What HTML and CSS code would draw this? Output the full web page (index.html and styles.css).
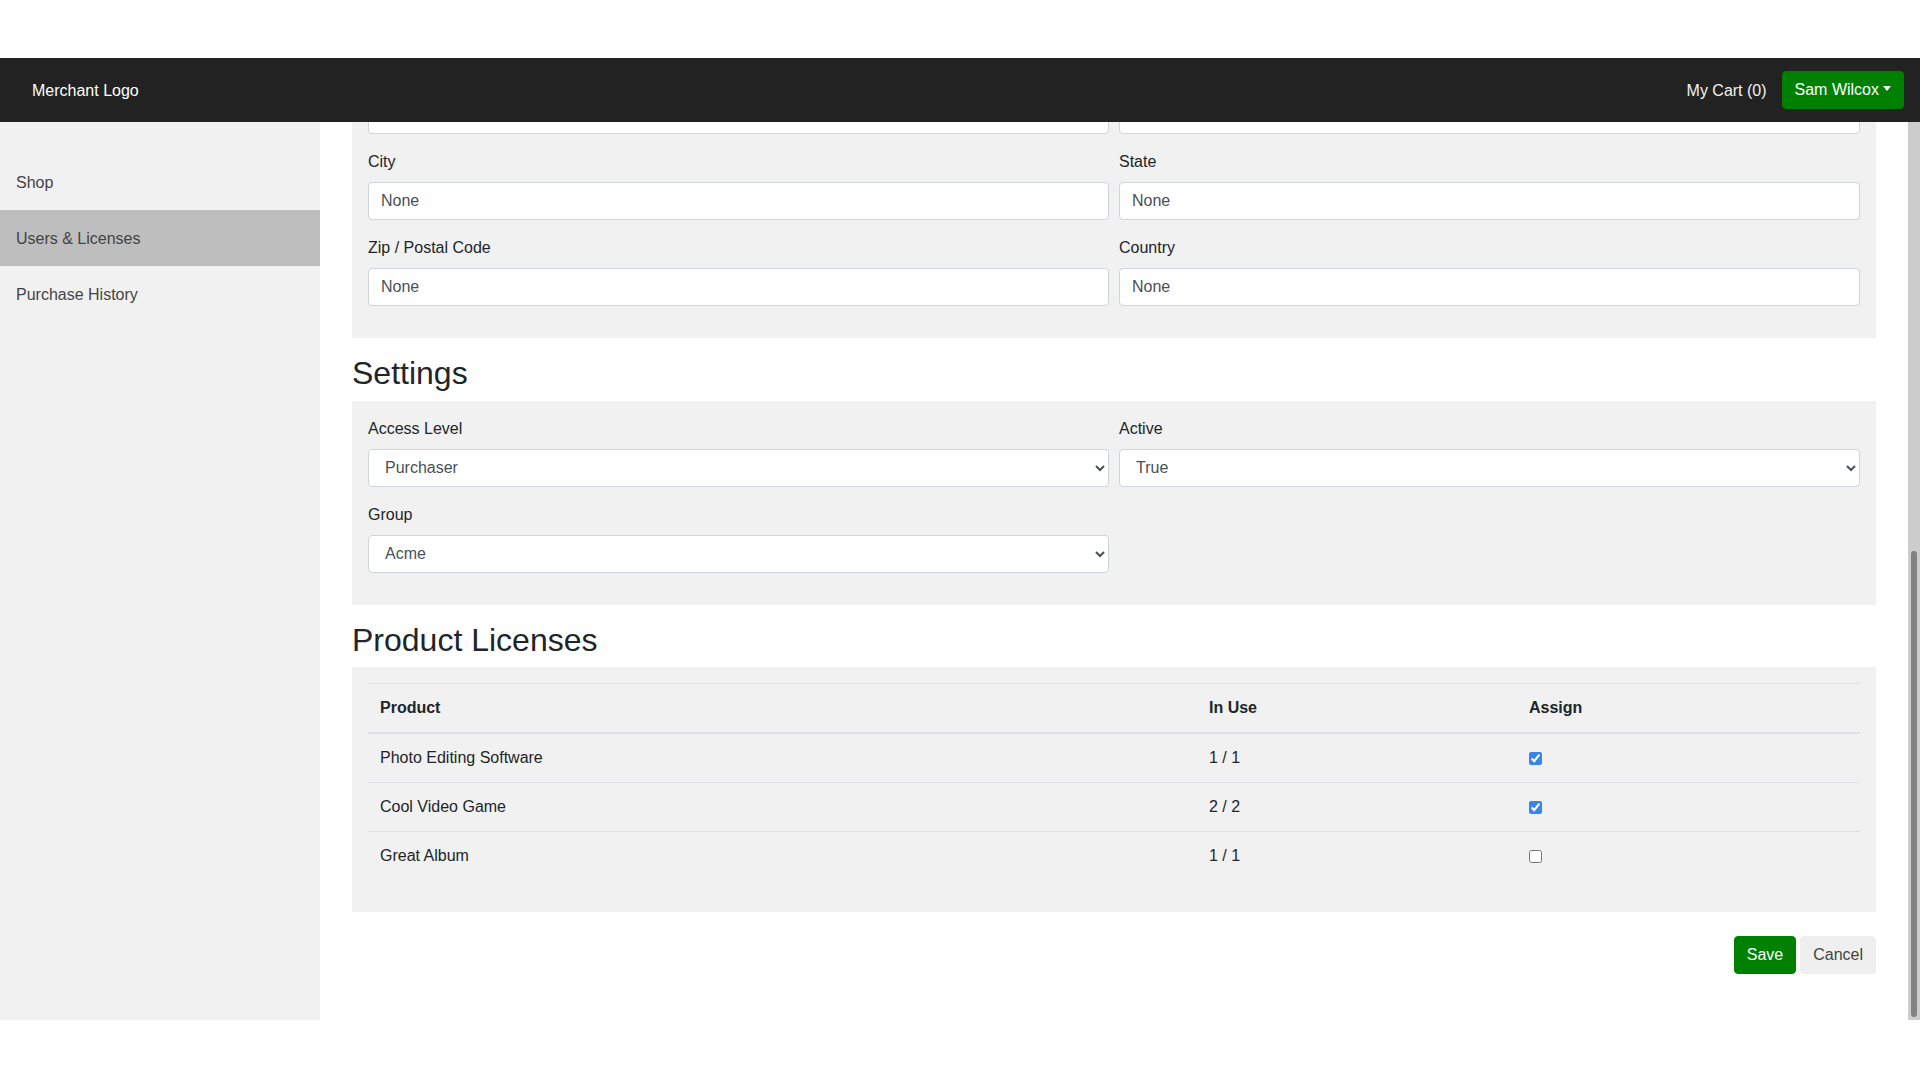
FILE: index.html
```html
<!DOCTYPE html>
<html lang="en">
<head>
<meta charset="utf-8">
<title>Users &amp; Licenses</title>
<link rel="stylesheet" href="styles.css">
</head>
<body>
<div class="topspace"></div>
<header class="navbar">
  <a class="brand" href="#">Merchant Logo</a>
  <div class="nav-right">
    <a class="cart" href="#">My Cart (0)</a>
    <button class="btn btn-green dropdown-toggle" type="button">Sam Wilcox</button>
  </div>
</header>
<div class="layout">
  <aside class="sidebar">
    <a class="side-item" href="#">Shop</a>
    <a class="side-item active" href="#">Users &amp; Licenses</a>
    <a class="side-item" href="#">Purchase History</a>
  </aside>
  <main class="content">
    <div class="content-inner">
      <section class="card">
        <div class="form-row">
          <div class="form-group"><input class="form-control" aria-label="Address Line 1"></div>
          <div class="form-group"><input class="form-control" aria-label="Address Line 2"></div>
        </div>
        <div class="form-row">
          <div class="form-group"><label>City</label><input class="form-control" value="None"></div>
          <div class="form-group"><label>State</label><input class="form-control" value="None"></div>
        </div>
        <div class="form-row">
          <div class="form-group"><label>Zip / Postal Code</label><input class="form-control" value="None"></div>
          <div class="form-group"><label>Country</label><input class="form-control" value="None"></div>
        </div>
      </section>
      <h2 class="section-title">Settings</h2>
      <section class="card">
        <div class="form-row">
          <div class="form-group"><label>Access Level</label>
            <select class="form-control"><option>Purchaser</option><option>Administrator</option></select>
          </div>
          <div class="form-group"><label>Active</label>
            <select class="form-control"><option>True</option><option>False</option></select>
          </div>
        </div>
        <div class="form-row">
          <div class="form-group"><label>Group</label>
            <select class="form-control"><option>Acme</option></select>
          </div>
        </div>
      </section>
      <h2 class="section-title">Product Licenses</h2>
      <section class="card card-last">
        <table class="table">
          <thead>
            <tr><th class="col-product">Product</th><th class="col-use">In Use</th><th class="col-assign">Assign</th></tr>
          </thead>
          <tbody>
            <tr><td>Photo Editing Software</td><td>1 / 1</td><td><input type="checkbox" class="check" checked></td></tr>
            <tr><td>Cool Video Game</td><td>2 / 2</td><td><input type="checkbox" class="check" checked></td></tr>
            <tr><td>Great Album</td><td>1 / 1</td><td><input type="checkbox" class="check"></td></tr>
          </tbody>
        </table>
      </section>
      <div class="actions">
        <button class="btn btn-green" type="button">Save</button>
        <button class="btn btn-light" type="button">Cancel</button>
      </div>
    </div>
  </main>
  <div class="scrollbar"><div class="scroll-thumb"></div></div>
</div>
</body>
</html>
```

FILE: styles.css
```css
* { box-sizing: border-box; }

html, body {
  margin: 0;
  height: 100%;
  overflow: hidden;
}

body {
  font-family: "Liberation Sans", Arial, Helvetica, sans-serif;
  font-size: 16px;
  line-height: 1.5;
  color: #212529;
  background: #fff;
}

.topspace { height: 58px; }

.navbar {
  height: 64px;
  background: #222222;
  display: flex;
  align-items: center;
  justify-content: space-between;
  padding: 0 16px 0 32px;
}

.brand {
  color: #fff;
  text-decoration: none;
  font-size: 16px;
  padding-top: 2px;
}

.nav-right {
  display: flex;
  align-items: center;
  gap: 15px;
}

.cart {
  color: #f2f2f2;
  text-decoration: none;
  padding-top: 2px;
}

.btn {
  font-family: inherit;
  font-size: 16px;
  line-height: 24px;
  padding: 6px 12px;
  border: 1px solid transparent;
  border-radius: 4px;
  cursor: pointer;
}

.btn-green {
  background: #008000;
  border-color: #008000;
  color: #fff;
}

.btn-light {
  background: #efefef;
  border-color: #efefef;
  color: #444;
}

.dropdown-toggle::after {
  content: "";
  display: inline-block;
  margin-left: 4px;
  vertical-align: 4px;
  border-top: 5px solid #fff;
  border-left: 4px solid transparent;
  border-right: 4px solid transparent;
}

.layout {
  display: flex;
  height: 898px;
}

.sidebar {
  width: 320px;
  flex: 0 0 320px;
  background: #f1f1f1;
  padding-top: 32px;
  display: flex;
  flex-direction: column;
}

.side-item {
  display: block;
  height: 56px;
  padding: 17px 16px 15px;
  color: #444;
  text-decoration: none;
}

.side-item.active { background: #bebebe; }

.content {
  flex: 1;
  min-width: 0;
  overflow: hidden;
  display: flex;
  flex-direction: column;
  justify-content: flex-end;
}

.content-inner {
  flex: 0 0 auto;
  padding: 0 32px 46px;
}

.scrollbar {
  flex: 0 0 12px;
  width: 12px;
  background: #cccccc;
  padding: 3px;
  display: flex;
  flex-direction: column;
  justify-content: flex-end;
}

.scroll-thumb {
  height: 466px;
  background: #828282;
  border-radius: 3px;
}

.section-title {
  margin: 0 0 8px;
  font-size: 32px;
  font-weight: 500;
  line-height: 1.2;
  color: #212529;
}

.card {
  background: #f1f1f1;
  padding: 16px;
  margin-bottom: 16px;
}

.card-last { margin-bottom: 24px; }

.form-row {
  display: grid;
  grid-template-columns: 1fr 1fr;
  column-gap: 10px;
}

.form-group { margin-bottom: 16px; }

.form-group label {
  display: block;
  margin-bottom: 8px;
  color: #212529;
}

.form-control {
  display: block;
  width: 100%;
  height: 38px;
  padding: 6px 12px;
  font-family: inherit;
  font-size: 16px;
  line-height: 24px;
  color: #495057;
  background-color: #fff;
  border: 1px solid #ced4da;
  border-radius: 4px;
}

.table {
  width: 100%;
  border-collapse: collapse;
  margin-bottom: 16px;
  color: #212529;
}

.table th,
.table td {
  padding: 12px;
  text-align: left;
  vertical-align: top;
  border-top: 1px solid #dee2e6;
  line-height: 24px;
}

.table thead th {
  border-bottom: 2px solid #dee2e6;
  font-weight: bold;
}

.col-product { width: 829px; }
.col-use { width: 320px; }

.check {
  margin: 0;
  width: 13px;
  height: 13px;
  vertical-align: middle;
  accent-color: #3a85e6;
}

.actions {
  display: flex;
  justify-content: flex-end;
  gap: 4px;
}
```
